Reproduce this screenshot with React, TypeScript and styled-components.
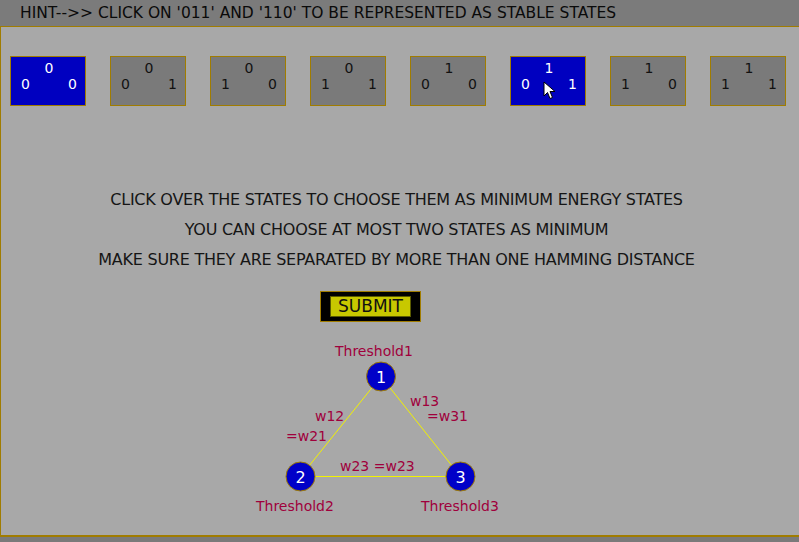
import React from 'react'
import styled, { createGlobalStyle } from 'styled-components'

const GlobalStyle = createGlobalStyle`
  html, body {
    margin: 0;
    padding: 0;
    background: #7a7a7a;
  }
  body {
    font-family: "DejaVu Sans", "Liberation Sans", sans-serif;
  }
`

const gold = '#a07c00'

const Page = styled.div`
  width: 799px;
  height: 542px;
  position: relative;
  overflow: hidden;
`

const HintBar = styled.div`
  height: 26px;
  background: #7b7b7b;
  border-bottom: 1px solid ${gold};
  display: flex;
  align-items: center;
  padding-left: 20px;
  font-size: 15.5px;
  color: #0a0a0a;
  white-space: nowrap;
`

const Panel = styled.div`
  height: 508px;
  background: #a8a8a8;
  border-left: 1px solid ${gold};
  border-bottom: 2px solid ${gold};
  display: flex;
  flex-direction: column;
`

const StateRow = styled.div`
  display: flex;
  gap: 24px;
  padding: 29px 0 0 9px;
`

const StateBox = styled.div<{ $selected: boolean }>`
  width: 74px;
  height: 48px;
  border: 1px solid ${gold};
  background: ${({ $selected }) => ($selected ? '#0000c0' : '#7a7a7a')};
  color: ${({ $selected }) => ($selected ? '#ffffff' : '#111111')};
  font-size: 14px;
  display: flex;
  flex-direction: column;
  cursor: pointer;
`

const TopBit = styled.div`
  text-align: center;
  padding: 3px 0 0 2px;
  line-height: 16px;
`

const BottomBits = styled.div`
  display: flex;
  justify-content: space-between;
  padding: 0 8px 0 10px;
  line-height: 16px;
`

const Instructions = styled.div`
  margin-top: 79px;
  padding-right: 7px;
  display: flex;
  flex-direction: column;
  align-items: center;
  font-size: 16px;
  letter-spacing: -0.25px;
  color: #151515;
`

const Line = styled.div`
  line-height: 30px;
  white-space: nowrap;
`

const SubmitFrame = styled.div`
  margin: 16px 0 0 319px;
  width: fit-content;
  background: #000;
  border: 1px solid ${gold};
  padding: 4px 9px;
`

const SubmitButton = styled.button`
  width: 81px;
  height: 21px;
  margin: 0;
  padding: 0;
  background: #c8c800;
  border: 1px solid #5a5a00;
  font-family: "DejaVu Sans", sans-serif;
  font-size: 17px;
  line-height: 19px;
  color: #111;
  display: block;
  cursor: pointer;
`

const Graph = styled.svg`
  display: block;
  margin: 14px 0 0 249px;
  overflow: visible;
`

const Cursor = styled.svg`
  position: absolute;
  left: 543px;
  top: 81px;
`

const hint = "HINT-->> CLICK ON '011' AND '110' TO BE REPRESENTED AS STABLE STATES"

const states = ['000', '001', '010', '011', '100', '101', '110', '111']
const selected = ['000', '101']

const labelColor = '#a0003c'

const nodes = [
  { id: '1', x: 131, y: 40.5 },
  { id: '2', x: 50.5, y: 140.5 },
  { id: '3', x: 210.5, y: 140.5 },
]

const labels = [
  { text: 'Threshold1', x: 85, y: 20 },
  { text: 'Threshold2', x: 6, y: 174.5 },
  { text: 'Threshold3', x: 171, y: 174.5 },
  { text: 'w12', x: 65, y: 84.5 },
  { text: '=w21', x: 36, y: 104.5 },
  { text: 'w13', x: 160, y: 69.5 },
  { text: '=w31', x: 177, y: 84.5 },
  { text: 'w23 =w23', x: 90, y: 134.5 },
]

const App: React.FC = () => {
  return (
    <Page>
      <GlobalStyle />
      <HintBar>{hint}</HintBar>
      <Panel>
        <StateRow>
          {states.map((s) => (
            <StateBox key={s} $selected={selected.includes(s)}>
              <TopBit>{s[0]}</TopBit>
              <BottomBits>
                <span>{s[1]}</span>
                <span>{s[2]}</span>
              </BottomBits>
            </StateBox>
          ))}
        </StateRow>

        <Instructions>
          <Line>CLICK OVER THE STATES TO CHOOSE THEM AS MINIMUM ENERGY STATES</Line>
          <Line>YOU CAN CHOOSE AT MOST TWO STATES AS MINIMUM</Line>
          <Line>MAKE SURE THEY ARE SEPARATED BY MORE THAN ONE HAMMING DISTANCE</Line>
        </Instructions>

        <SubmitFrame>
          <SubmitButton>SUBMIT</SubmitButton>
        </SubmitFrame>

        <Graph width="260" height="180" viewBox="0 0 260 180">
          <g stroke="#f2f200" strokeWidth="1">
            <line x1={nodes[0].x} y1={nodes[0].y} x2={nodes[1].x} y2={nodes[1].y} />
            <line x1={nodes[0].x} y1={nodes[0].y} x2={nodes[2].x} y2={nodes[2].y} />
            <line x1={nodes[1].x} y1={nodes[1].y} x2={nodes[2].x} y2={nodes[2].y} />
          </g>
          {nodes.map((n) => (
            <g key={n.id}>
              <circle cx={n.x} cy={n.y} r="14.5" fill="#0000c8" stroke={gold} strokeWidth="1" />
              <text
                x={n.x}
                y={n.y + 6}
                textAnchor="middle"
                fill="#fff"
                fontSize="16"
                fontFamily="DejaVu Sans, sans-serif"
              >
                {n.id}
              </text>
            </g>
          ))}
          {labels.map((l) => (
            <text key={l.text} x={l.x} y={l.y} fill={labelColor} fontSize="14" fontFamily="DejaVu Sans, sans-serif">
              {l.text}
            </text>
          ))}
        </Graph>
      </Panel>
      <Cursor width="14" height="20" viewBox="0 0 14 20">
        <path d="M1 1 L1 15 L4.5 11.5 L7 17.5 L9.5 16.5 L7 10.5 L12 10.5 Z" fill="#fff" stroke="#000" strokeWidth="1" />
      </Cursor>
    </Page>
  )
}

export default App
